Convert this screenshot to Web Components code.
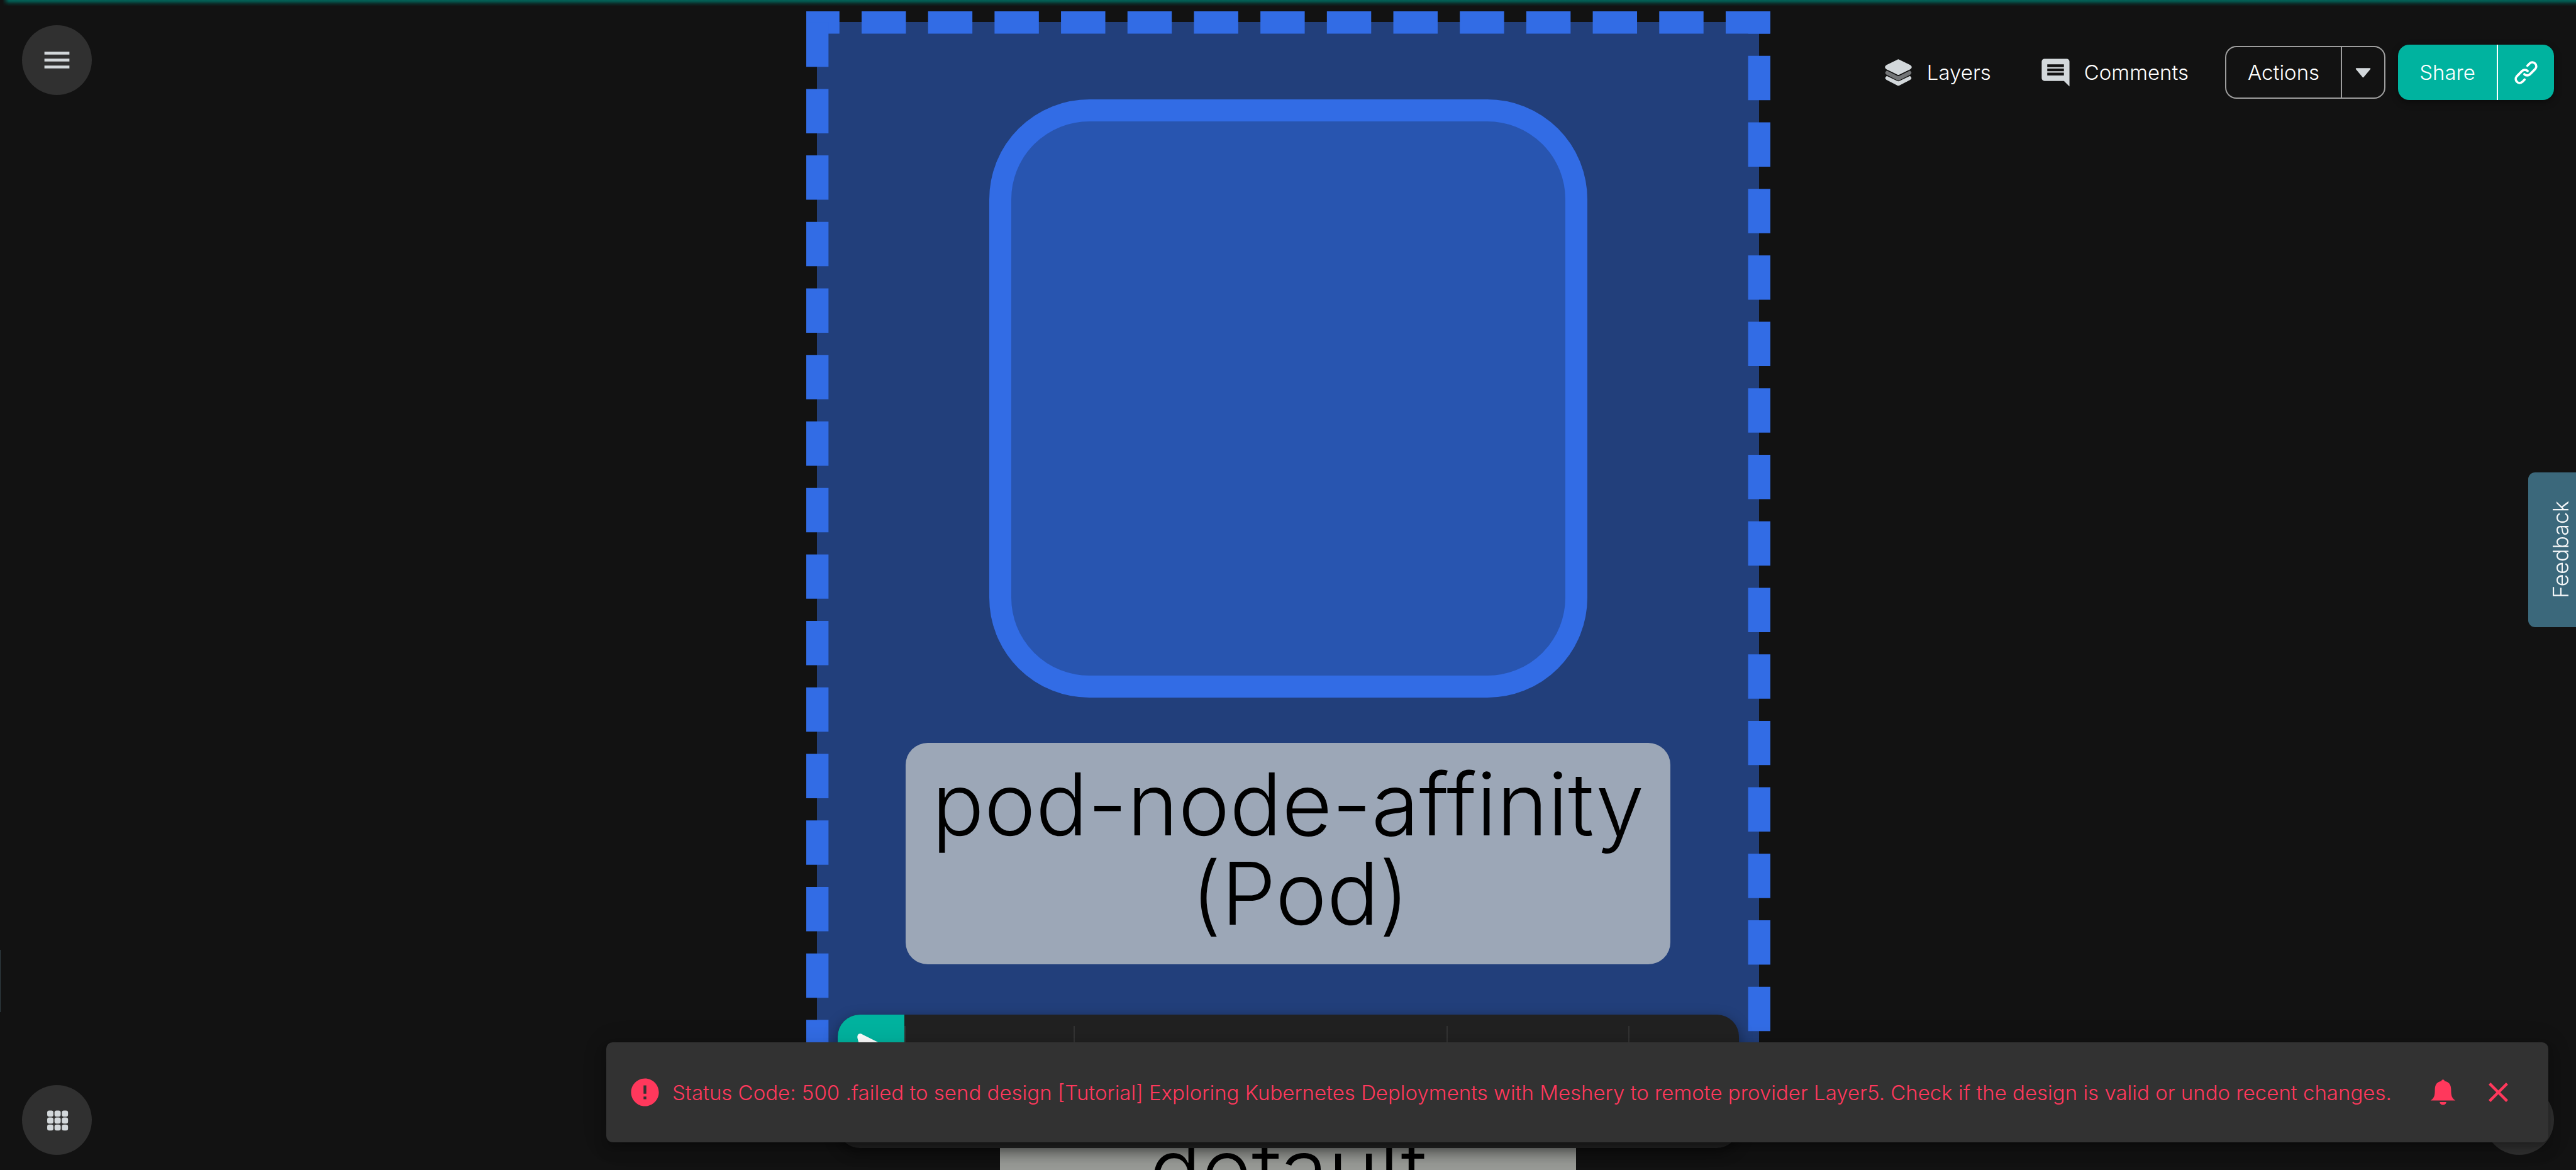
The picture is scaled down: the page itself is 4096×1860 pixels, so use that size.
<!DOCTYPE html>
<html lang="en">
<head>
<meta charset="utf-8">
<title>Design canvas</title>
<style>
  body { margin: 0; background: #121212; font-family: Inter, "Liberation Sans", sans-serif; font-weight: 300; }
</style>
</head>
<body>
<design-app></design-app>
<script>
const define = (name, markup, setup) => {
  const template = document.createElement('template');
  template.innerHTML = markup;
  customElements.define(name, class extends HTMLElement {
    connectedCallback() {
      if (this.shadowRoot) return;
      const root = this.attachShadow({ mode: 'open' });
      root.append(template.content.cloneNode(true));
      if (setup) setup(this, root);
    }
  });
};

/* Icons: each drawn in its own view box */
const ICONS = {
  menu: ['0 0 24 24', '<path d="M3 18h18v-2H3v2zm0-5h18v-2H3v2zm0-7v2h18V6H3z"/>'],
  grid: ['0 0 72 72', [0, 1, 2].map(r => [0, 1, 2].map(c =>
    `<rect x="${15 + c * 15.8}" y="${15.7 + r * 15}" width="13.4" height="13" rx="4.4"/>`).join('')).join('')],
  layers: ['0 0 72 72', '<path d="M33.5 8.3Q36 6 38.5 8.3L61.5 19.3Q68.5 24 61.5 28.7L38.5 40Q36 41.8 33.5 40L10.5 28.7Q3.5 24 10.5 19.3Z"/><path opacity=".5" d="M11 31.5Q4.5 36.2 10.5 40.5L33.5 52.2Q36 53.8 38.5 52.2L61.5 40.5Q67.5 36.2 61 31.5L39 42.5Q36 44.2 33 42.5Z"/><path d="M11 43Q4.5 47.5 10.5 51.7L33.5 63.4Q36 65.2 38.5 63.4L61.5 51.7Q67.5 47.5 61 43L39 53.8Q36 55.5 33 53.8Z"/>'],
  comment: ['0 0 24 24', '<path d="M21.99 4c0-1.1-.89-2-1.99-2H4c-1.1 0-2 .9-2 2v12c0 1.1.9 2 2 2h14l4 4-.01-18zM18 14H6v-2h12v2zm0-3H6V9h12v2zm0-3H6V6h12v2z"/>'],
  caret: ['0 0 72 72', '<path stroke="currentColor" stroke-width="3" stroke-linejoin="round" d="M21.5 27.5H50.5L36 45Z"/>'],
  link: ['-11 -11 72 72', '<g fill="none" stroke="currentColor" stroke-width="5" stroke-linecap="round" stroke-linejoin="round"><path d="M28.5 21.5A8.5 8.5 0 0 0 16.5 21.5L5 33A8.5 8.5 0 0 0 17 45L22 40"/><path d="M21.5 28.5A8.5 8.5 0 0 0 33.5 28.5L45 17A8.5 8.5 0 0 0 33 5L28 10"/></g>'],
  error: ['0 0 24 24', '<path d="M12 2C6.48 2 2 6.48 2 12s4.48 10 10 10 10-4.48 10-10S17.52 2 12 2zm1 15h-2v-2h2v2zm0-4h-2V7h2v6z"/>'],
  bell: ['0 0 72 72', '<path d="M32.6 12a3.4 3.4 0 0 1 6.8 0C48 13 53.5 19 53.5 30C53.5 44 55 48 62.6 53.7H9.4C17 48 18.5 44 18.5 30C18.5 19 24 13 32.6 12ZM28.9 57H43.1a7.1 6.3 0 0 1 -14.2 0Z"/>'],
  close: ['0 0 24 24', '<path d="M19 6.41 17.59 5 12 10.59 6.41 5 5 6.41 10.59 12 5 17.59 6.41 19 12 13.41 17.59 19 19 17.59 13.41 12z"/>'],
  pointer: ['0 0 144 144', '<path d="M43 52C41 43 46 38 54 43L112 72Q118 78 110 82L84 90L70 115Q62 121 59 112Z"/>']
};

define('ui-icon', `
  <style>
    :host { display: block; flex: none; width: 53px; height: 53px; }
    svg { display: block; width: 100%; height: 100%; fill: currentColor; }
  </style>
  <svg aria-hidden="true"></svg>`,
  (host, root) => {
    const [box, shapes] = ICONS[host.getAttribute('name')];
    const svg = root.querySelector('svg');
    svg.setAttribute('viewBox', box);
    svg.innerHTML = shapes;
  });

define('round-button', `
  <style>
    :host { display: block; }
    button { display: grid; place-items: center; width: 111px; height: 111px; padding: 0; border: 0;
      border-radius: 50%; background: #303030; color: #d3d8db; }
  </style>
  <button type="button"><slot></slot></button>`,
  (host, root) => root.querySelector('button').setAttribute('aria-label', host.getAttribute('label')));

define('text-action', `
  <style>
    :host { display: block; }
    button { display: flex; align-items: center; gap: 19px; padding: 0; border: 0; background: none;
      color: #fff; font: inherit; font-size: 33px; line-height: 48px; }
    ::slotted(ui-icon) { color: #d3d8db; }
  </style>
  <button type="button"><slot name="icon"></slot><span><slot></slot></span></button>`);

define('split-button', `
  <style>
    :host { display: block; }
    .box { display: flex; box-sizing: border-box; height: 84px; border: 2px solid #9e9e9e;
      border-radius: 18px; overflow: hidden; color: #fff; }
    button { display: flex; align-items: center; padding: 0 34px; border: 0; background: none;
      color: inherit; font: inherit; font-size: 33px; line-height: 48px; }
    button + button { width: 69px; padding: 0; justify-content: center; border-left: 2px solid #9e9e9e; color: #d3d8db; }
    :host([filled]) .box { height: 88px; border: 0; background: #00b39f; box-shadow: 0 4px 12px #0006; }
    :host([filled]) button + button { width: 91px; padding: 0; border-left-color: #fff; color: #fff; }
  </style>
  <div class="box">
    <button type="button"><slot></slot></button>
    <button type="button" class="side"><slot name="side"></slot></button>
  </div>`,
  (host, root) => root.querySelector('.side').setAttribute('aria-label', host.getAttribute('side-label')));

define('top-bar', `
  <style>
    :host { display: flex; justify-content: space-between; align-items: flex-start; padding: 40px 35px 0; }
    nav { display: flex; align-items: center; margin-top: 31px; }
    text-action + text-action { margin-left: 76px; }
    split-button { margin-left: 58px; }
    split-button + split-button { margin-left: 20px; }
  </style>
  <round-button label="Menu"><ui-icon name="menu"></ui-icon></round-button>
  <nav>
    <text-action><ui-icon slot="icon" name="layers"></ui-icon>Layers</text-action>
    <text-action><ui-icon slot="icon" name="comment"></ui-icon>Comments</text-action>
    <split-button side-label="More actions">Actions<ui-icon slot="side" name="caret"></ui-icon></split-button>
    <split-button filled side-label="Copy link">Share<ui-icon slot="side" name="link"></ui-icon></split-button>
  </nav>`);

define('tool-dock', `
  <style>
    :host { display: block; width: 1433px; height: 212px; border-radius: 35px; overflow: hidden;
      background: #212121; box-shadow: 0 7px 22px #0006; }
    .tools { display: flex; height: 100%; }
    button { width: 106px; height: 106px; padding: 0; border: 0; background: #00b39f; color: #fff; }
    ui-icon { width: 100%; height: 100%; }
    i { box-sizing: border-box; margin: 18px 0; border-left: 2px solid #333; }
    .a { width: 269px; } .b { width: 593px; } .c { width: 289px; } .d { flex: 1; }
  </style>
  <div class="tools">
    <button type="button" aria-label="Select"><ui-icon name="pointer"></ui-icon></button>
    <i class="a"></i><i class="b"></i><i class="c"></i><i class="d"></i>
  </div>`);

define('node-label', `
  <style>
    :host { display: block; box-sizing: border-box; padding: 26px 0 42px; color: #000; text-align: center;
      font-size: 138px; line-height: 142px; }
    slot { white-space: pre; }
  </style><slot></slot>`);

define('design-canvas', `
  <style>
    :host { display: flex; flex-direction: column; align-items: center; overflow: hidden; }
    .group { position: relative; flex: none; box-sizing: border-box; display: flex; flex-direction: column; align-items: center;
      width: 1498px; height: 1690px; margin-top: 35px; padding-top: 123px; background: #223f7b; }
    .outline { position: absolute; top: -17px; left: -17px; width: 1533px; height: 1725px; overflow: hidden; }
    .pod { flex: none; box-sizing: border-box; width: 951px; height: 951px; border: 35px solid #326ce5;
      border-radius: 159px; background: #2855b0; }
    .group node-label { width: 1216px; margin-top: 72px; border-radius: 35px; background: #9ca7b7; }
    .namespace { flex: none; width: 916px; margin-top: 37px; background: #979995; }
  </style>
  <div class="group">
    <svg class="outline" viewBox="0 0 2080 2340" preserveAspectRatio="none" fill="none" stroke="#326ce5"
         stroke-width="48" stroke-dasharray="95.6 47.8" aria-hidden="true">
      <path d="M-24 24H2080"/><path d="M24 24V2340"/><path d="M2056 -47.4V2340"/>
    </svg>
    <div class="pod"></div>
    <node-label>pod-node-affinity
 (Pod)</node-label>
  </div>
  <node-label class="namespace">default</node-label>`);

define('snack-bar', `
  <style>
    :host { display: flex; align-items: center; box-sizing: border-box; height: 159px; padding: 0 53px 0 35px;
      border-radius: 10px; background: #323232; color: #ff385c;
      box-shadow: 0 7px 11px -2px #0003, 0 13px 22px #0002, 0 2px 40px #0002; }
    p { flex: 1; margin: 0 0 0 17px; font-size: 33px; line-height: 48px; white-space: nowrap; }
    .actions { display: flex; gap: 35px; margin-left: 24px; }
    button { padding: 0; border: 0; background: none; color: inherit; }
  </style>
  <ui-icon name="error"></ui-icon>
  <p role="alert"><slot></slot></p>
  <div class="actions">
    <button type="button" aria-label="Notifications"><ui-icon name="bell"></ui-icon></button>
    <button type="button" aria-label="Close"><ui-icon name="close"></ui-icon></button>
  </div>`);

define('feedback-tab', `
  <style>
    :host { display: block; }
    button { display: block; box-sizing: border-box; width: 76px; height: 246px; padding: 0 28px 0 0; border: 0;
      border-radius: 0 11px 11px 0; background: #3b687b; color: #f5f7f8; font: inherit;
      font-size: 34px; line-height: 48px; writing-mode: vertical-rl; rotate: 180deg; text-align: center; }
  </style>
  <button type="button"><slot></slot></button>`);

define('design-app', `
  <style>
    :host { display: flex; flex-direction: column; justify-content: space-between; position: relative;
      height: 100vh; overflow: hidden; background: #121212; }
    .glow { position: absolute; inset: 0 0 auto 0; height: 10px;
      background: linear-gradient(#036358, #04524a 25%, #0d2a27 60%, #12121200);
      mask-image: linear-gradient(90deg, #0000 4px, #000 14px); }
    design-canvas { position: absolute; inset: 0; }
    top-bar, footer { position: relative; }
    .handle { position: absolute; left: 0; top: 1510px; width: 1px; height: 99px; background: #303c42; }
    feedback-tab { position: absolute; right: 0; top: 751px; }
    footer { display: flex; justify-content: space-between; align-items: flex-end; padding: 0 35px 24px; }
    tool-dock { margin-bottom: 11px; }
    snack-bar { position: absolute; right: 44px; bottom: 44px; }
    @media (min-width: 3200px) { snack-bar { width: 3088px; } }
  </style>
  <design-canvas></design-canvas>
  <div class="glow"></div>
  <div class="handle"></div>
  <top-bar></top-bar>
  <feedback-tab>Feedback</feedback-tab>
  <footer>
    <round-button label="Apps"><ui-icon name="grid"></ui-icon></round-button>
    <tool-dock></tool-dock>
    <round-button label="Help"></round-button>
  </footer>
  <snack-bar>Status Code: 500 .failed to send design [Tutorial] Exploring Kubernetes Deployments with Meshery to remote provider Layer5. Check if the design is valid or undo recent changes.</snack-bar>`);
</script>
</body>
</html>
